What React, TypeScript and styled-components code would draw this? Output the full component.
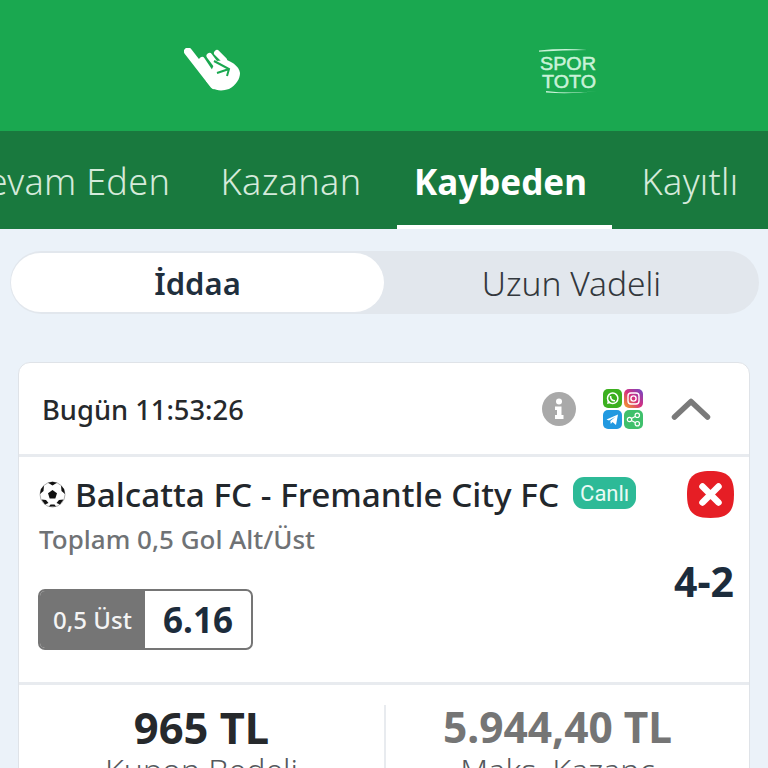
import React from 'react'
import styled, { createGlobalStyle } from 'styled-components'

const GlobalStyle = createGlobalStyle`
  html, body {
    margin: 0;
    padding: 0;
    background: #ebf2f9;
    font-family: "Noto Sans", "Open Sans", sans-serif;
  }
`

const Page = styled.div`
  width: 768px;
  height: 768px;
  overflow: hidden;
  background: #ebf2f9;
`

const TopBar = styled.div`
  height: 131px;
  box-sizing: border-box;
  padding-top: 11px;
  display: flex;
  background: #1aa850;
`

const HandItem = styled.div`
  flex: 0 0 50%;
  box-sizing: border-box;
  display: flex;
  align-items: center;
  justify-content: center;
  padding-left: 42px;
`

const LogoItem = styled.div`
  flex: 0 0 50%;
  box-sizing: border-box;
  display: flex;
  align-items: center;
  justify-content: center;
  padding-right: 14px;
`

const TabBar = styled.div`
  height: 98px;
  display: flex;
  background: #19793e;
  overflow: hidden;
`

const TabTrack = styled.div`
  display: flex;
  margin-left: -43px;
  flex-shrink: 0;
`

const Tab = styled.div<{ $active?: boolean; $width: number; $endPad?: number }>`
  width: ${p => p.$width}px;
  box-sizing: border-box;
  height: 98px;
  padding: 6px ${p => p.$endPad ?? 0}px 0 0;
  display: flex;
  align-items: center;
  justify-content: center;
  white-space: nowrap;
  color: ${p => (p.$active ? '#fff' : '#d5eadb')};
  font-size: ${p => (p.$active ? 35 : 36)}px;
  letter-spacing: ${p => (p.$active ? 0 : 0.3)}px;
  font-weight: ${p => (p.$active ? 700 : 300)};
  border-bottom: 4px solid ${p => (p.$active ? '#fff' : 'transparent')};
`

const Segments = styled.div`
  margin: 22px 9px 0 10px;
  height: 63px;
  box-sizing: border-box;
  padding: 2px 0 2px 1px;
  display: flex;
  background: #e2e7ed;
  border-radius: 32px;
`

const Segment = styled.div<{ $active?: boolean }>`
  flex: ${p => (p.$active ? '0 0 373px' : 1)};
  display: flex;
  align-items: center;
  justify-content: center;
  border-radius: 30px;
  font-size: ${p => (p.$active ? 31 : 33.5)}px;
  font-weight: ${p => (p.$active ? 600 : 300)};
  color: ${p => (p.$active ? '#1f2f3d' : '#33383d')};
  background: ${p => (p.$active ? '#fff' : 'transparent')};
`

const Card = styled.div`
  margin: 48px 18px 0;
  background: #fff;
  border: 1px solid #dfe3e8;
  border-radius: 12px 12px 0 0;
`

const CardHeader = styled.div`
  height: 91px;
  display: flex;
  align-items: center;
  padding: 0 38px 0 23px;
  border-bottom: 3px solid #e8ebef;
`

const DateText = styled.div`
  flex: 1;
  padding-top: 2px;
  font-size: 27.3px;
  font-weight: 500;
  color: #26292c;
`

const HeaderIcons = styled.div`
  display: flex;
  align-items: center;
`

const AppGrid = styled.div`
  margin: 0 28px 0 27px;
  display: grid;
  grid-template-columns: 19px 19px;
  gap: 2px;
`

const MatchRow = styled.div`
  height: 228px;
  box-sizing: border-box;
  display: flex;
  justify-content: space-between;
  padding: 14px 15px 0 20px;
  border-bottom: 3px solid #e8ebef;
`

const MatchInfo = styled.div`
  display: flex;
  flex-direction: column;
`

const TeamLine = styled.div`
  display: flex;
  align-items: center;
  height: 46px;
`

const TeamName = styled.div`
  margin-left: 9px;
  font-size: 33.3px;
  font-weight: 500;
  color: #22272c;
  white-space: nowrap;
`

const LiveBadge = styled.div`
  margin: -2px 0 0 14px;
  height: 32px;
  padding: 0 7px;
  display: flex;
  align-items: center;
  background: #2dba97;
  color: #eafaf5;
  border-radius: 11px;
  font-family: Roboto, sans-serif;
  font-size: 22px;
`

const Market = styled.div`
  margin-top: 4px;
  font-size: 26px;
  font-weight: 500;
  color: #6f7275;
`

const OddBox = styled.div`
  margin-top: 32px;
  margin-left: -1px;
  width: 215px;
  height: 61px;
  box-sizing: border-box;
  display: flex;
  border: 2px solid #757575;
  border-radius: 7px;
  overflow: hidden;
`

const OddLabel = styled.div`
  width: 105px;
  display: flex;
  align-items: center;
  justify-content: center;
  background: #757575;
  color: #f4f4f4;
  font-size: 24px;
  font-weight: 500;
`

const OddValue = styled.div`
  flex: 1;
  display: flex;
  align-items: center;
  justify-content: center;
  font-size: 35px;
  font-weight: 700;
  color: #1c2c3c;
`

const ResultColumn = styled.div`
  display: flex;
  flex-direction: column;
  align-items: flex-end;
`

const ScoreText = styled.div`
  margin-top: 38px;
  font-size: 41px;
  line-height: 50px;
  font-weight: 700;
  color: #1c2c3c;
`

const Stats = styled.div`
  display: flex;
  padding-top: 20px;
`

const Stat = styled.div<{ $divided?: boolean }>`
  flex: 0 0 50%;
  display: flex;
  flex-direction: column;
  align-items: center;
  box-sizing: border-box;
  border-left: ${p => (p.$divided ? '2px solid #e8ebef' : 'none')};
  padding-right: ${p => (p.$divided ? 20 : 0)}px;
`

const StatValue = styled.div<{ $muted?: boolean }>`
  font-size: ${p => (p.$muted ? 42.5 : 43.5)}px;
  line-height: 44px;
  font-weight: 700;
  white-space: nowrap;
  color: ${p => (p.$muted ? '#757575' : '#26292c')};
`

const StatLabel = styled.div`
  font-size: 32px;
  line-height: 42px;
  font-weight: 300;
  white-space: nowrap;
  color: #55595d;
`

const LogoText = styled.text`
  font-family: "Liberation Sans", sans-serif;
  font-size: 18px;
  fill: #c9f2d8;
  stroke: #c9f2d8;
  stroke-width: 0.5px;
`

const HandIcon = () => (
  <svg width="58" height="46" viewBox="0 0 58 46">
    <path d="M4 3.5 L30 37" stroke="#fff" strokeWidth="8" strokeLinecap="round" />
    <path d="M18 12 L28 27 M25.5 8 L33 18 M33 5 L40 12" stroke="#fff" strokeWidth="6" strokeLinecap="round" />
    <path d="M32 13 L43 12 C50 15 55 19 56 25 C56 31 52 37 45 41 C39 43 33 43 28 40 L22 33 Z" fill="#fff" />
    <path d="M30 13 L45 21 L43 28 M45 21 L33 25" stroke="#1aa850" strokeWidth="2" fill="none" />
  </svg>
)

const SporTotoLogo = () => (
  <svg width="60" height="47" viewBox="0 0 60 47">
    <path d="M0 2.5 Q24 0 48 2 Q24 2 0 3.8 Z" fill="#c9f2d8" />
    <LogoText x="1" y="22" textLength="56" lengthAdjust="spacingAndGlyphs">SPOR</LogoText>
    <LogoText x="3" y="40" textLength="54" lengthAdjust="spacingAndGlyphs">TOTO</LogoText>
    <path d="M7 43 Q32 46 58 43 Q32 46.5 7 44.5 Z" fill="#c9f2d8" />
  </svg>
)

const InfoIcon = () => (
  <svg width="34" height="34" viewBox="0 0 34 34">
    <circle cx="17" cy="17" r="17" fill="#a9a9a9" />
    <circle cx="17" cy="9.5" r="3" fill="#fff" />
    <path d="M13 14.5 H19.5 V23 H21.5 V27 H13 V23 H15 V18 H13 Z" fill="#fff" />
  </svg>
)

const WhatsappIcon = () => (
  <svg width="19" height="19" viewBox="0 0 19 19">
    <rect width="19" height="19" rx="5" fill="#3cb01f" />
    <circle cx="9.7" cy="9.3" r="5.2" fill="none" stroke="#fff" strokeWidth="1.5" />
    <path d="M4 15 L5 11 L8 14 Z" fill="#fff" />
    <path d="M7.5 7 C7.5 10 9.5 11.8 12 11.8" fill="none" stroke="#fff" strokeWidth="1.6" />
  </svg>
)

const InstagramIcon = () => (
  <svg width="19" height="19" viewBox="0 0 19 19">
    <defs>
      <linearGradient id="ig" x1="0" y1="1" x2="1" y2="0">
        <stop offset="0" stopColor="#f5a623" />
        <stop offset="0.5" stopColor="#d62f7f" />
        <stop offset="1" stopColor="#6a49c9" />
      </linearGradient>
    </defs>
    <rect width="19" height="19" rx="5" fill="url(#ig)" />
    <rect x="4" y="4" width="11" height="11" rx="3" fill="none" stroke="#fff" strokeWidth="1.4" />
    <circle cx="9.5" cy="9.5" r="2.6" fill="none" stroke="#fff" strokeWidth="1.4" />
  </svg>
)

const TelegramIcon = () => (
  <svg width="19" height="19" viewBox="0 0 19 19">
    <rect width="19" height="19" rx="5" fill="#2299e0" />
    <path d="M3.5 9.5 L15 4.5 L13 15 L9.5 12 L7.8 14 L7.3 11 L12.5 6.8 L6 10.5 Z" fill="#fff" />
  </svg>
)

const ShareIcon = () => (
  <svg width="19" height="19" viewBox="0 0 19 19">
    <rect width="19" height="19" rx="5" fill="#3fc06c" />
    <path d="M5.5 9.5 L13 5.5 M5.5 9.5 L13 13.5" stroke="#fff" strokeWidth="1.2" />
    <circle cx="5.5" cy="9.5" r="2.2" fill="#3fc06c" stroke="#fff" strokeWidth="1.2" />
    <circle cx="13.3" cy="5.3" r="2.2" fill="#3fc06c" stroke="#fff" strokeWidth="1.2" />
    <circle cx="13.3" cy="13.7" r="2.2" fill="#3fc06c" stroke="#fff" strokeWidth="1.2" />
  </svg>
)

const ChevronUp = () => (
  <svg width="40" height="24" viewBox="0 0 40 24">
    <path d="M3.5 20 L20 4.5 L36.5 20" fill="none" stroke="#7a7a7a" strokeWidth="5.5" strokeLinecap="round" strokeLinejoin="round" />
  </svg>
)

const BallIcon = () => (
  <svg width="27" height="27" viewBox="0 0 27 27">
    <circle cx="13.5" cy="13.5" r="12.5" fill="#fff" stroke="#999" strokeWidth="0.8" />
    <path d="M13.5 9 L18 12.2 L16.3 17.4 H10.7 L9 12.2 Z" fill="#111" />
    <path d="M9 1.8 L13.5 4.5 L18 1.8 L13.5 0.8 Z M1 13 L4.5 10 L5 4.5 L2 8 Z M26 13 L22.5 10 L22 4.5 L25 8 Z M6 23.5 L9.5 22 L7 19 L2.5 18.5 Z M21 23.5 L17.5 22 L20 19 L24.5 18.5 Z M10 25.5 H17 L15.5 23.5 H11.5 Z" fill="#111" />
  </svg>
)

const LostIcon = () => (
  <svg width="47" height="47" viewBox="0 0 47 47">
    <path d="M23.5 0 C41 0 47 6 47 23.5 C47 41 41 47 23.5 47 C6 47 0 41 0 23.5 C0 6 6 0 23.5 0 Z" fill="#e61e25" />
    <path d="M15.5 15.5 L31.5 31.5 M31.5 15.5 L15.5 31.5" stroke="#fff" strokeWidth="6.5" strokeLinecap="round" />
  </svg>
)

export default function App() {
  return (
    <Page>
      <GlobalStyle />
      <TopBar>
        <HandItem><HandIcon /></HandItem>
        <LogoItem><SporTotoLogo /></LogoItem>
      </TopBar>
      <TabBar>
        <TabTrack>
          <Tab $width={228} $endPad={10}>Devam Eden</Tab>
          <Tab $width={212}>Kazanan</Tab>
          <Tab $width={215} $endPad={8} $active>Kaybeden</Tab>
          <Tab $width={156}>Kayıtlı</Tab>
        </TabTrack>
      </TabBar>
      <Segments>
        <Segment $active>İddaa</Segment>
        <Segment>Uzun Vadeli</Segment>
      </Segments>
      <Card>
        <CardHeader>
          <DateText>Bugün 11:53:26</DateText>
          <HeaderIcons>
            <InfoIcon />
            <AppGrid>
              <WhatsappIcon />
              <InstagramIcon />
              <TelegramIcon />
              <ShareIcon />
            </AppGrid>
            <ChevronUp />
          </HeaderIcons>
        </CardHeader>
        <MatchRow>
          <MatchInfo>
            <TeamLine>
              <BallIcon />
              <TeamName>Balcatta FC - Fremantle City FC</TeamName>
              <LiveBadge>Canlı</LiveBadge>
            </TeamLine>
            <Market>Toplam 0,5 Gol Alt/Üst</Market>
            <OddBox>
              <OddLabel>0,5 Üst</OddLabel>
              <OddValue>6.16</OddValue>
            </OddBox>
          </MatchInfo>
          <ResultColumn>
            <LostIcon />
            <ScoreText>4-2</ScoreText>
          </ResultColumn>
        </MatchRow>
        <Stats>
          <Stat>
            <StatValue>965 TL</StatValue>
            <StatLabel>Kupon Bedeli</StatLabel>
          </Stat>
          <Stat $divided>
            <StatValue $muted>5.944,40 TL</StatValue>
            <StatLabel>Maks. Kazanç</StatLabel>
          </Stat>
        </Stats>
      </Card>
    </Page>
  )
}
